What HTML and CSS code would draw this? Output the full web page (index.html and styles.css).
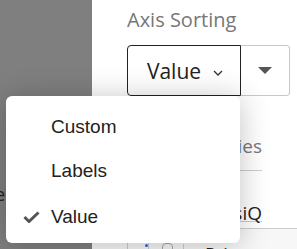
FILE: index.html
```
<!DOCTYPE html>
<html lang="en">
<head>
    <meta charset="UTF-8">
    <meta name="viewport" content="width=device-width, initial-scale=1.0">
    <title>Axis Sorting</title>
    <link rel="stylesheet" href="styles.css">
</head>
<body>
    <div class="layout">
        <div class="sidebar">
            <span class="cut-text">Type</span>
        </div>

        <div class="panel">
            <div class="section-title">Axis Sorting</div>
            <div class="btn-group">
                <button class="btn btn-main">Value
                    <svg class="chev" width="10" height="6" viewBox="0 0 10 6"><polyline points="1,1 5,5 9,1" fill="none" stroke="#333" stroke-width="1.3"/></svg>
                </button>
                <button class="btn btn-caret">
                    <svg width="14" height="7" viewBox="0 0 14 7"><polygon points="0,0 14,0 7,7" fill="#555"/></svg>
                </button>
            </div>

            <div class="field-label">Data Series</div>
            <div class="field-row">StatsiQ</div>
            <div class="table-row">
                <div class="cell cell-a"></div>
                <div class="cell cell-b"><span class="dot"></span></div>
                <div class="cell cell-c"><span class="chip"></span></div>
                <div class="cell cell-d">Primary</div>
            </div>
        </div>
    </div>

    <!-- sort menu, open over the panel -->
    <div class="menu">
        <div class="menu-item"><span class="check"></span>Custom</div>
        <div class="menu-item"><span class="check"></span>Labels</div>
        <div class="menu-item selected">
            <span class="check">
                <svg width="17" height="12" viewBox="0 0 17 12"><polyline points="1.5,6 6,10.5 15.5,1.5" fill="none" stroke="#555" stroke-width="3"/></svg>
            </span>Value
        </div>
    </div>
</body>
</html>
```

FILE: styles.css
```
* {
    margin: 0;
    padding: 0;
    box-sizing: border-box;
}

body {
    width: 297px;
    height: 249px;
    overflow: hidden;
    position: relative;
    font-family: "Open Sans", sans-serif;
    background: #fff;
}

.layout {
    display: flex;
    height: 249px;
    overflow: hidden;
}

.sidebar {
    width: 92px;
    background-color: #7f7f7f;
    position: relative;
    overflow: hidden;
}

.cut-text {
    position: absolute;
    right: 87px;
    top: 182px;
    font-size: 18px;
    color: #222;
}

.panel {
    flex: 1;
    padding: 6px 0 0 35px;
    background: #fff;
}

.section-title {
    font-size: 20px;
    line-height: 28px;
    color: #777;
}

.btn-group {
    display: flex;
    margin-top: 11px;
}

.btn {
    height: 51px;
    background: #fff;
    font-family: "Open Sans", sans-serif;
    display: flex;
    align-items: center;
    justify-content: center;
}

.btn-main {
    width: 114px;
    border: 1px solid #222;
    border-radius: 4px 0 0 4px;
    font-size: 21px;
    color: #222;
    gap: 12px;
    padding-left: 2px;
}

.chev {
    margin-top: 4px;
}

.btn-caret {
    width: 49px;
    border: 1px solid #c8c8c8;
    border-left: none;
    border-radius: 0 4px 4px 0;
}

.field-label {
    width: 135px;
    text-align: right;
    font-size: 19px;
    line-height: 24px;
    color: #777;
    margin-top: 38px;
    padding-bottom: 12px;
    border-bottom: 1px solid #ccc;
}

.field-row {
    width: 135px;
    text-align: right;
    font-size: 19px;
    line-height: 24px;
    color: #222;
    padding-top: 30px;
    height: 51px;
    border-bottom: 1px solid #ccc;
}

.table-row {
    display: flex;
    margin-left: -35px;
    margin-top: 6px;
    border-top: 1px solid #ccc;
    padding-top: 14px;
    height: 30px;
    font-size: 18px;
    background: #f7f7f7;
}

.cell {
    height: 16px;
    border-left: 1px solid #ccc;
}

.cell-a {
    width: 35px;
    border-left: none;
}

.cell-b {
    width: 21px;
    position: relative;
}

.dot {
    position: absolute;
    left: 17px;
    top: 1px;
    width: 3px;
    height: 3px;
    border-radius: 50%;
    background: #2a6fd6;
}

.cell-c {
    width: 35px;
    padding-left: 13px;
}

.chip {
    display: block;
    width: 11px;
    height: 14px;
    border: 1px solid #aaa;
    border-radius: 4px;
}

.cell-d {
    padding-left: 21px;
    color: #222;
    line-height: 20px;
    margin-top: 1px;
}

.menu {
    position: absolute;
    left: 6px;
    top: 96px;
    width: 234px;
    height: 147px;
    padding: 9px 0;
    background: #fff;
    border-radius: 6px;
    box-shadow: 0 2px 30px rgba(0, 0, 0, 0.24);
    font-family: "Liberation Sans", Arial, sans-serif;
}

.menu-item {
    display: flex;
    align-items: center;
    height: 44px;
    font-size: 19px;
    color: #222;
}

.selected {
    padding-top: 3px;
}

.check {
    width: 45px;
    padding-left: 17px;
    display: flex;
    align-items: center;
}
```
